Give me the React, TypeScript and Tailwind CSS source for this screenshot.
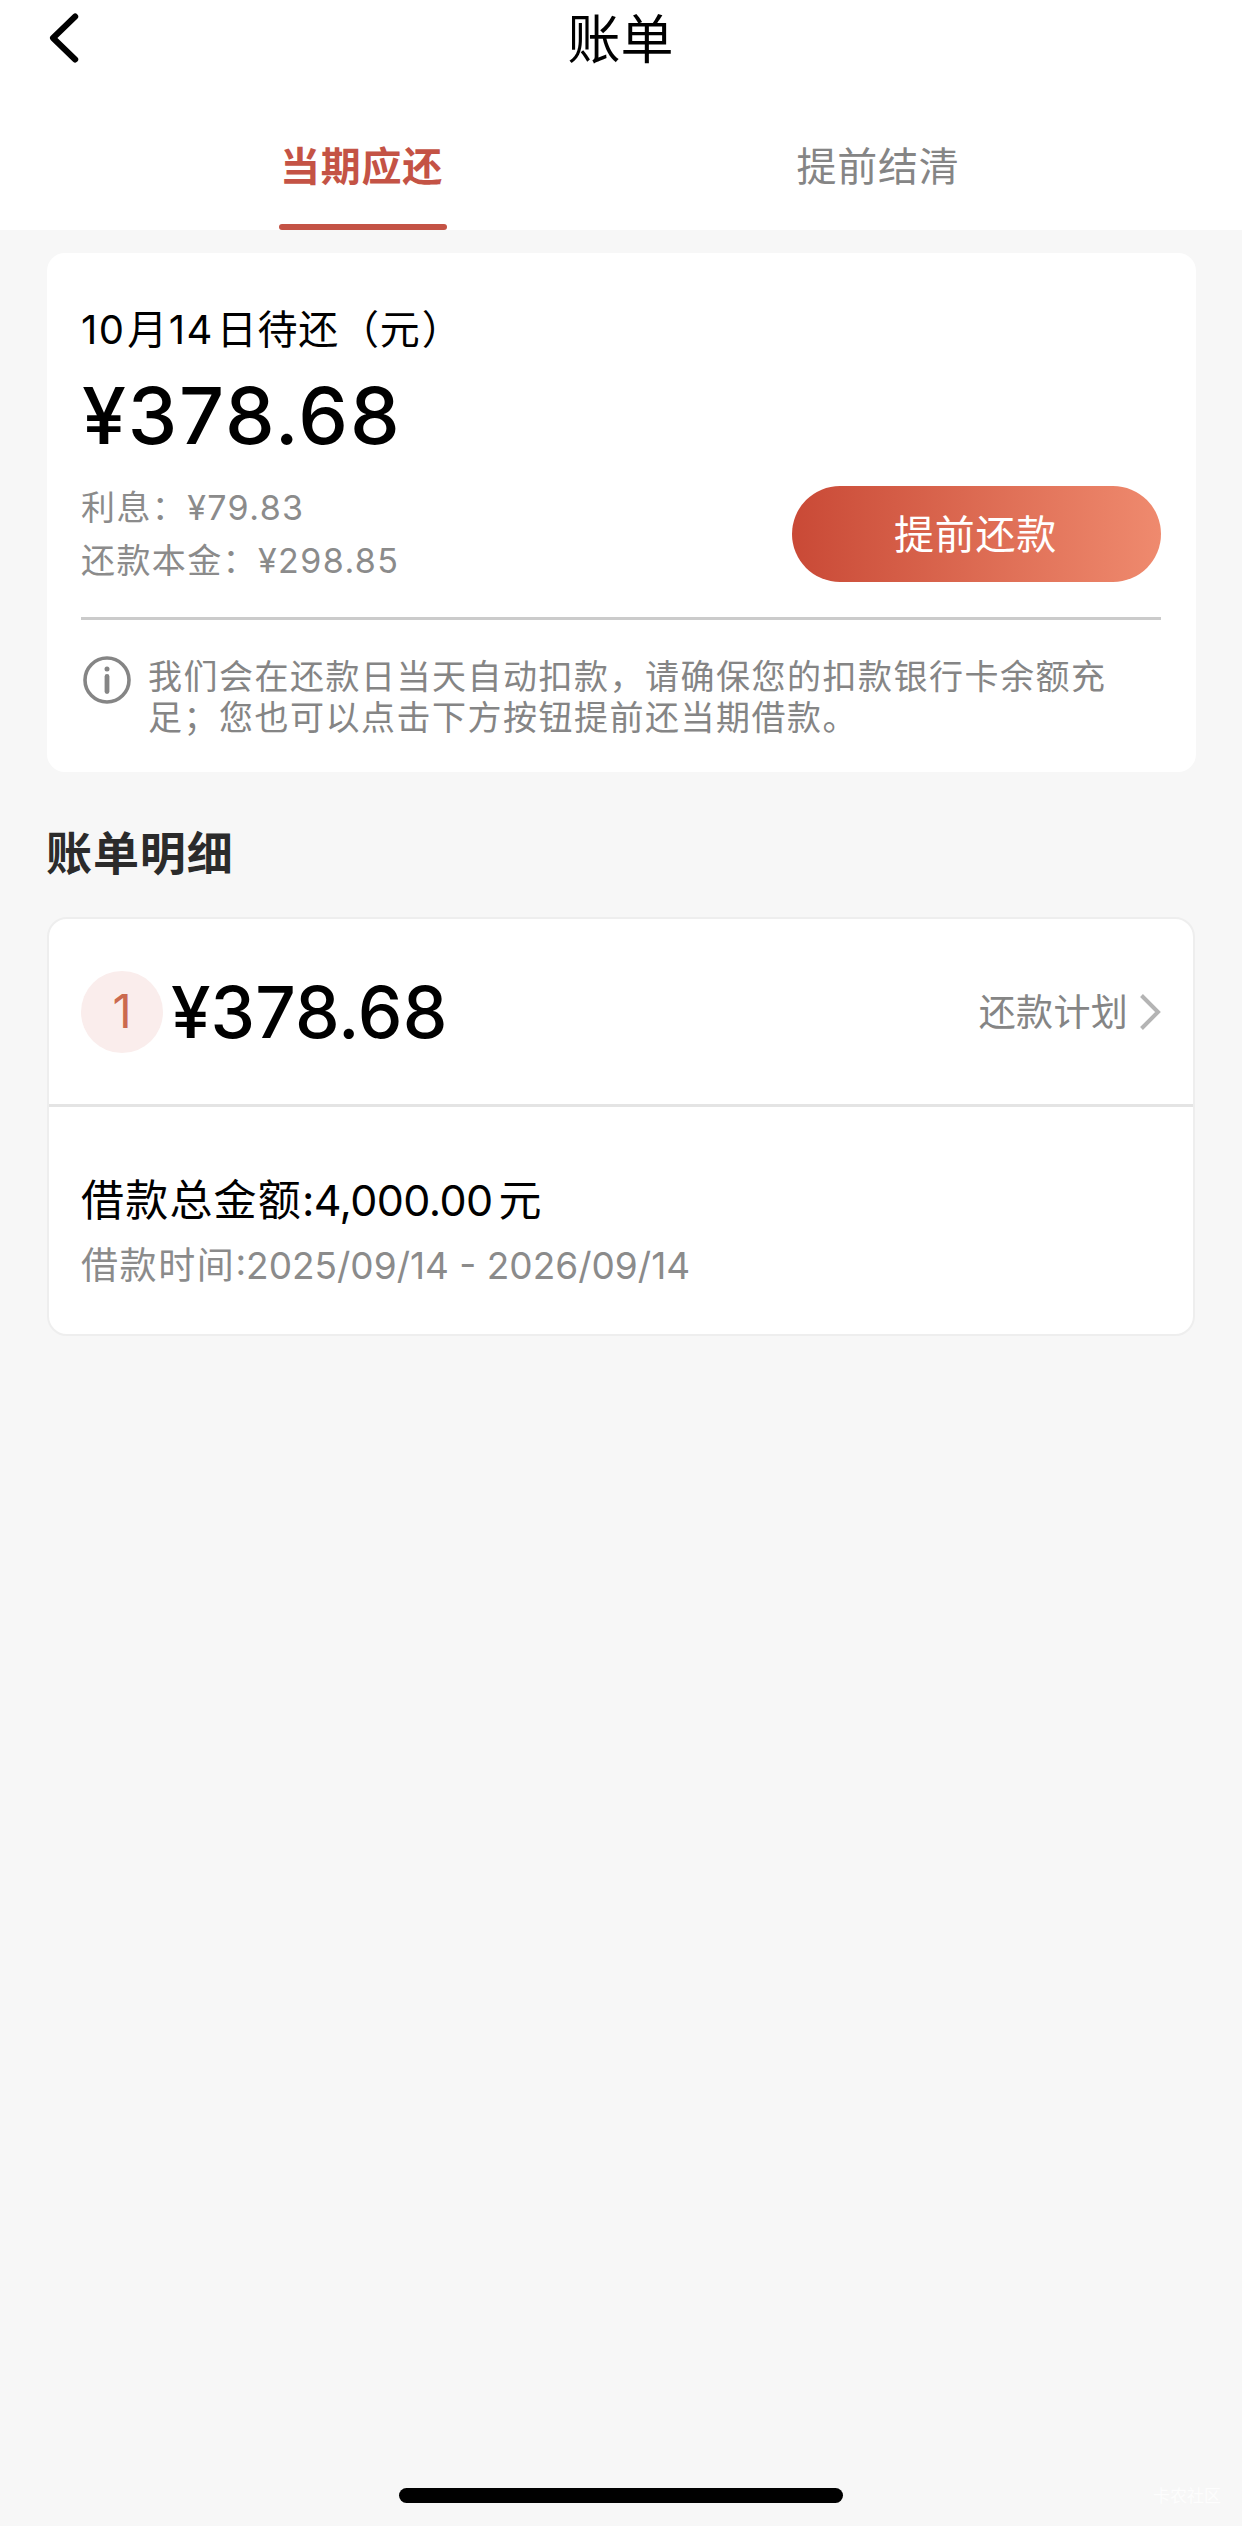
const TABS = [
  { label: "当期应还", active: true },
  { label: "提前结清", active: false },
];

function Header() {
  return (
    <header className="h-[230px] bg-white">
      <div className="grid h-[76px] grid-cols-[1fr_auto_1fr] items-center">
        <svg className="ml-[47px] h-[52px] w-[34px]" viewBox="0 0 34 52" fill="none" stroke="#000" strokeWidth="6" strokeLinecap="round" strokeLinejoin="round" aria-hidden>
          <path d="M28.2 4.5 6 26l22.2 21.5" />
        </svg>
        <h1 className="pt-[4px] pr-px text-[53px] leading-[72px] text-black">账单</h1>
      </div>
      <nav className="flex h-[154px] justify-between pr-[280px] pl-[279px]">
        {TABS.map((tab) => (
          <div key={tab.label} className="flex w-[168px] flex-col items-center justify-between">
            <span
              className={
                tab.active
                  ? "mt-[61px] mr-[3px] text-[40px] leading-[60px] font-bold tracking-[0.8px] whitespace-nowrap text-[#c45345]"
                  : "mt-[61px] text-[40px] leading-[60px] tracking-[0.8px] whitespace-nowrap text-[#858585]"
              }
            >
              {tab.label}
            </span>
            {tab.active && <span className="h-[6px] w-full rounded-full bg-[#c45345]" />}
          </div>
        ))}
      </nav>
    </header>
  );
}

function DueCard() {
  return (
    <section className="mx-[47px] mt-[23px] h-[519px] w-[1149px] rounded-[18px] bg-white pt-[49px] pr-[35px] pl-[34px]">
      <p className="text-[40px] leading-[56px] tracking-[1.4px] text-black">
        10<span className="ml-[2px]">月</span>14
        <span className="ml-[3px] tracking-[0.8px]">日待还（元</span>
        <span className="ml-px">）</span>
      </p>
      <p className="mt-[17px] ml-px text-[79px] leading-[80px] font-medium tracking-[1.8px] text-black">¥378.68</p>
      <div className="mt-[26px] flex items-start justify-between">
        <div className="text-[34px] leading-[53px] tracking-[1.4px] text-[#8b8b8b]">
          <p>利息：¥79.83</p>
          <p>还款本金：¥298.85</p>
        </div>
        <button className="mt-[5px] h-[96px] w-[369px] rounded-full bg-linear-to-r from-[#c94936] to-[#ef8a6e] pt-px pr-[2px] text-[40px] tracking-[0.8px] text-white">
          提前还款
        </button>
      </div>
      <div className="mt-[30px] h-[3px] bg-[#cbcbcb]" />
      <div className="mt-[36px] flex gap-[17px]">
        <svg className="ml-[2px] size-[48px] shrink-0" viewBox="0 0 48 48" fill="none" stroke="#858585" aria-hidden>
          <circle cx="24" cy="24" r="22" strokeWidth="3.6" />
          <path d="M24 20.5v15" strokeWidth="4.8" strokeLinecap="round" />
          <circle cx="24" cy="13" r="2.5" fill="#858585" stroke="none" />
        </svg>
        <p className="text-[34px] leading-[41px] tracking-[1.5px] whitespace-nowrap text-[#858585]">
          我们会在还款日当天自动扣款，请确保您的扣款银行卡余额充
          <br />
          足；您也可以点击下方按钮提前还当期借款。
        </p>
      </div>
    </section>
  );
}

function BillCard() {
  return (
    <section className="mx-[47px] h-[419px] w-[1148px] rounded-[20px] border-2 border-[#eeeeee] bg-white">
      <div className="flex h-[185px] items-center pr-[32px] pl-[32px]">
        <span className="flex size-[82px] items-center justify-center rounded-full bg-[#faedec] text-[47px] text-[#cb6a4f]">1</span>
        <span className="ml-[8px] text-[71px] leading-[80px] font-medium tracking-[0.1px] text-black">¥378.68</span>
        <span className="ml-auto pt-[2px] text-[37px] tracking-[0.3px] text-[#858585]">还款计划</span>
        <svg className="ml-[11px] h-[38px] w-[22px]" viewBox="0 0 22 38" fill="none" stroke="#b4b4b4" strokeWidth="4" aria-hidden>
          <path d="M2.5 2.5 19 19 2.5 35.5" />
        </svg>
      </div>
      <div className="h-[3px] bg-[#e4e4e4]" />
      <div className="px-[32px] pt-[61px]">
        <p className="text-[43px] leading-[64px] text-black">
          <span className="tracking-[1.2px]">借款总金额</span>
          <span className="tracking-[-0.6px]">:4,000.00</span>
          <span className="ml-[6px]">元</span>
        </p>
        <p className="mt-[4px] text-[37px] leading-[60px] text-[#8b8b8b]">
          <span className="tracking-[1.6px]">借款时间</span>
          <span>:2025/09/14 - 2026/09/14</span>
        </p>
      </div>
    </section>
  );
}

export default function App() {
  return (
    <div className="flex h-[2526px] w-[1242px] flex-col bg-[#f7f7f7] font-[Inter,'Noto_Sans_CJK_SC',sans-serif]">
      <Header />
      <DueCard />
      <h2 className="mt-[47px] mb-[30px] ml-[46px] text-[46px] leading-[68px] font-bold tracking-[0.9px] text-[#2b2b2b]">账单明细</h2>
      <BillCard />
      <footer className="mt-auto grid h-[52px] grid-cols-[1fr_auto_1fr] items-start pt-[14px]">
        <span />
        <span className="h-[15px] w-[444px] rounded-full bg-black" />
        <span className="mr-[21px] text-right text-[17px] leading-[16px] text-[#fdfdfd]">卡农社区</span>
      </footer>
    </div>
  );
}
